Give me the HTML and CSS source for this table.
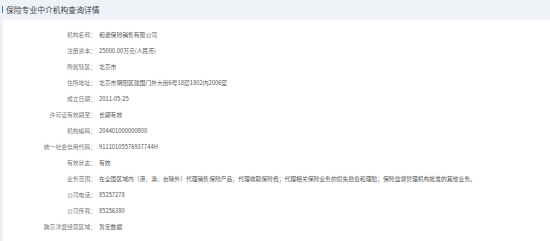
FILE: index.html
```html
<!DOCTYPE html>
<html lang="zh-CN">
<head>
<meta charset="utf-8">
<title>保险专业中介机构查询详情</title>
<link rel="stylesheet" href="styles.css">
</head>
<body>
<div class="title"><span class="bar"></span><span>保险专业中介机构查询详情</span></div>
<div class="panel">
  <div class="row"><div class="label">机构名称：</div><div class="value">和谐保险销售有限公司</div></div>
  <div class="row"><div class="label">注册资本：</div><div class="value">25000.00万元(人民币)</div></div>
  <div class="row"><div class="label">所属辖区：</div><div class="value">北京市</div></div>
  <div class="row"><div class="label">住所地址：</div><div class="value">北京市朝阳区建国门外大街6号18层1802内2006室</div></div>
  <div class="row"><div class="label">成立日期：</div><div class="value">2011-05-25</div></div>
  <div class="row"><div class="label">许可证有效期至：</div><div class="value">长期有效</div></div>
  <div class="row"><div class="label">机构编码：</div><div class="value">204401000000800</div></div>
  <div class="row"><div class="label">统一社会信用代码：</div><div class="value">91110105576937744H</div></div>
  <div class="row"><div class="label">有效状态：</div><div class="value">有效</div></div>
  <div class="row"><div class="label">业务范围：</div><div class="value">在全国区域内（港、澳、台除外）代理销售保险产品；代理收取保险费；代理相关保险业务的损失勘查和理赔；保险监督管理机构批准的其他业务。</div></div>
  <div class="row"><div class="label">公司电话：</div><div class="value">85257278</div></div>
  <div class="row"><div class="label">公司传真：</div><div class="value">85256380</div></div>
  <div class="row"><div class="label">跨京津冀经营区域：</div><div class="value">暂无数据</div></div>
</div>
</body>
</html>
```
FILE: styles.css
```css
html, body {
  margin: 0;
  padding: 0;
}
body {
  background: #eef2f7;
  font-family: "Noto Sans CJK SC", "Noto Sans", sans-serif;
  color: #333;
}
.title {
  height: 19px;
  display: flex;
  align-items: center;
  padding-left: 2px;
  font-size: 7.8px;
  color: #3c4250;
  border-bottom: 1px solid #f4f6f9;
}
.bar {
  width: 1px;
  height: 7px;
  background: #2f7be0;
  margin-right: 3px;
}
.panel {
  margin-left: 3px;
  background: #fff;
  padding-top: 7px;
  padding-bottom: 10px;
}
.row {
  display: grid;
  grid-template-columns: 93px 1fr;
  column-gap: 3px;
  height: 16px;
  line-height: 16px;
  font-size: 5.8px;
  white-space: nowrap;
}
.label {
  text-align: right;
  color: #777;
}
.value {
  color: #555;
}
```
